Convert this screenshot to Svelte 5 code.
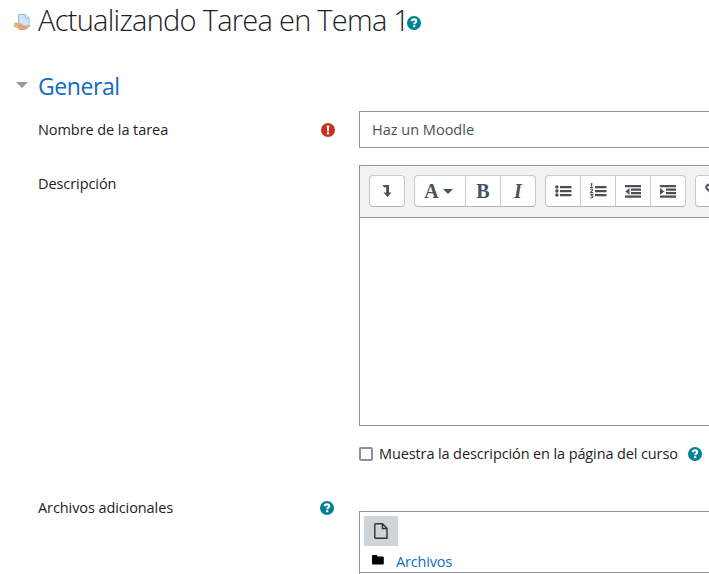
<script>
  const lines = [2, 6, 10];
</script>

{#snippet help()}
  <svg class="dot" viewBox="0 0 14 14" aria-label="Ayuda">
    <circle cx="7" cy="7" r="7" fill="#008196" />
    <path d="M4.600 5.300C4.900 3.900 5.800 3.400 7 3.400c1.300 0 2.200.7 2.200 1.800 0 1.600-2 1.500-2 3" fill="none" stroke="#fff" stroke-width="2.100" />
    <rect x="6.100" y="9.200" width="2.200" height="2" fill="#fff" />
  </svg>
{/snippet}

<main>
  <header>
    <svg class="task" width="17" height="17" viewBox="0 0 17 17">
      <path d="M4.500.5h7l3.500 3.500v8.500H4.500z" fill="#cfe5fa" stroke="#8dbbe8" />
      <path d="M11.500.5V4H15" fill="#eaf5ff" stroke="#8dbbe8" />
      <path d="M0 9c2-.8 4-.8 6 0l2 1.100c1 .6.4 1.500-.7 1.400l4 .3L15 11c1.400-.1 1.500 1 .5 1.800-2.700 2.300-5 3.200-8 3C4.700 15.500 3 13.500 0 13z" fill="#e8b27c" />
      <path d="M4.500 11.300l3 .8 4 .1M5 15c3 1.200 6 .6 9-1.500" fill="none" stroke="#b87a45" stroke-width=".7" />
    </svg>
    <h1>Actualizando Tarea en Tema 1</h1>
    {@render help()}
  </header>

  <div class="section">
    <svg width="12" height="6" viewBox="0 0 12 6"><path d="M0 0h12L6 6z" fill="#999" /></svg>
    <h2>General</h2>
  </div>

  <div class="row name">
    <div class="label"><span class="t1">Nombre de la tarea</span>
      <svg class="dot" viewBox="0 0 14 14" aria-label="Obligatorio">
        <circle cx="7" cy="7" r="7" fill="#ca3120" />
        <path d="M5.800 2.500h2.400L7.900 8.200H6.100zM5.900 9.300h2.200v2.200H5.900z" fill="#fff" />
      </svg>
    </div>
    <div class="input"><span class="t2">Haz un Moodle</span></div>
  </div>

  <div class="row desc">
    <div class="label"><span class="t3">Descripción</span></div>
    <div class="field">
      <div class="editor">
        <div class="toolbar">
          <div class="group">
            <button aria-label="Mostrar más botones"><svg width="10" height="14" viewBox="0 0 10 14"><path d="M.5 1h6.500v7.500h2.500L5.500 13l-4-4.500H4.200V3.200H2z" /></svg></button>
          </div>
          <div class="group">
            <button class="wide"><b>A</b><svg class="caret" width="10" height="5" viewBox="0 0 10 5"><path d="M0 0h10L5 5z" /></svg></button>
            <button><b>B</b></button>
            <button><b><i>I</i></b></button>
          </div>
          <div class="group">
            <button aria-label="Lista"><svg width="17" height="13" viewBox="0 0 17 13">
              {#each lines as y}<circle cx="1.900" cy={y} r="1.800" /><path d="M5 {y - 1}h11.500v2.300H5z" />{/each}
            </svg></button>
            <button aria-label="Lista numerada"><svg width="17" height="16" viewBox="0 0 17 16">
              {#each lines as y}<path d="M5 {y + 1}h11.500v2.300H5z" />{/each}
              <path d="M.5 1.300l1.200-.6v4M0 4.500h3.200M.3 6.500c.5-.8 2.400-.7 2.300.4C2.500 7.900.6 8.300.5 9.500h2.700M.3 11.400h2.400L1.500 12.800c2.200 0 1.500 2.500-1.300 1.900" fill="none" stroke="#495057" stroke-width="1.100" />
            </svg></button>
            <button aria-label="Reducir sangría"><svg width="16" height="13" viewBox="0 0 16 13"><path d="M0 0h16v2.300H0zM6 3.500h10v2.300H6zM6 7h10v2.300H6zM0 10.500h16v2.300H0zM4.500 3v6.800L.3 6.400z" /></svg></button>
            <button aria-label="Aumentar sangría"><svg width="16" height="13" viewBox="0 0 16 13"><path d="M0 0h16v2.300H0zM6 3.500h10v2.300H6zM6 7h10v2.300H6zM0 10.500h16v2.300H0zM0 3v6.800l4.300-3.400z" /></svg></button>
          </div>
          <div class="group">
            <button class="link" aria-label="Enlace"><svg width="16" height="16" viewBox="0 0 16 16"><path d="M7.500 5.500L5.300 3.300a2 2 0 0 0-2.800 0l-.6.600a2 2 0 0 0 0 2.800L5 9.800a2 2 0 0 0 2.800 0M8.500 10.500l2.200 2.200a2 2 0 0 0 2.800 0l.6-.6a2 2 0 0 0 0-2.800L11 6.200a2 2 0 0 0-2.800 0" fill="none" stroke="#495057" stroke-width="2" /></svg></button>
          </div>
        </div>
        <div class="canvas"></div>
      </div>
      <div class="check">
        <span class="box"></span><span class="t4">Muestra la descripción en la página del curso</span>
        {@render help()}
      </div>
    </div>
  </div>

  <div class="row files">
    <div class="label"><span class="t5">Archivos adicionales</span>{@render help()}</div>
    <div class="manager">
      <div class="actions">
        <button class="new" aria-label="Agregar"><svg width="14" height="16" viewBox="0 0 14 16"><path d="M1.500.8h7L13 5.300v9.900H1.500A.7.7 0 0 1 .8 14.500v-13A.7.7 0 0 1 1.500.8zM8.400 1v4.500H13" fill="none" stroke="#343033" stroke-width="1.400" /></svg></button>
        <div class="path">
          <svg width="12" height="10" viewBox="0 0 12 10"><path d="M0 1Q0 0 1 0h3.300q1 0 1 1v.5h5.500q1 0 1 1V8.500q0 1-1 1H1q-1 0-1-1z" fill="#000" /></svg>
          <span class="t6">Archivos</span>
        </div>
      </div>
    </div>
  </div>
</main>

<style>
  :global(body) { background: #fff; overflow: hidden; }
  main {
    width: 709px; height: 574px; overflow: hidden; box-sizing: border-box;
    font-family: "Open Sans", "Noto Sans", sans-serif; font-size: 14.500px; line-height: 22px; color: #1d2125;
  }
  span { white-space: nowrap; }
  header { display: flex; align-items: center; height: 42px; padding-left: 14px; }
  .task { margin: 3px 7px 0 0; flex: none; }
  h1 { margin: -2px 0 0; width: 369px; font-size: 29px; font-weight: 300; line-height: 40px; white-space: nowrap; letter-spacing: -0.730px; }
  .dot { width: 14px; height: 14px; flex: none; }
  header .dot { margin-top: 4px; }
  .section { display: flex; align-items: center; height: 32px; margin-top: 29px; padding-left: 16px; gap: 10px; }
  .section svg { margin-bottom: 5px; }
  h2 { margin: -2px 0 0; font-size: 23px; font-weight: 400; line-height: 32px; color: #0f6cbf; letter-spacing: -0.430px; }
  .row { display: flex; padding-left: 38px; }
  .label { display: flex; justify-content: space-between; align-items: center; width: 297px; height: 22px; margin-right: 24px; flex: none; }
  .name { margin-top: 8px; }
  .name .label { margin-top: 8px; }
  .name .dot { margin-bottom: 1px; }
  .input { display: flex; align-items: center; flex: none; width: 370px; height: 37px; box-sizing: border-box; border: 1px solid #8f959e; padding-left: 12px; color: #495057; }
  .desc { margin-top: 17px; }
  .desc .label { margin-top: 8px; }
  .field { flex: none; width: 370px; }
  .editor { height: 261px; box-sizing: border-box; border: 1px solid #8f959e; display: flex; flex-direction: column; }
  .toolbar { display: flex; gap: 9px; height: 52px; padding: 9px; box-sizing: border-box; background: #f2f2f2; border-bottom: 1px solid #8f959e; flex: none; }
  .canvas { flex: 1; }
  .group { display: flex; height: 32px; box-sizing: border-box; border: 1px solid #c8c8c8; border-bottom-color: #b3b3b3; border-radius: 4px; background: #fff; flex: none; overflow: hidden; }
  button { display: flex; align-items: center; justify-content: center; width: 34px; height: 30px; padding: 0; border: 0; background: transparent; color: #495057; font: 20px/30px "Liberation Serif", serif; box-sizing: content-box; }
  button + button { border-left: 1px solid #ccc; }
  button svg { fill: #495057; }
  .wide { width: 50px; }
  .wide b { margin-left: -3px; }
  .caret { margin-left: 4px; }
  .link { justify-content: flex-start; padding-left: 9px; }
  .link svg { margin-bottom: 3px; }
  .check { display: flex; align-items: center; height: 22px; margin-top: 17px; }
  .box { width: 14px; height: 14px; box-sizing: border-box; border: 2px solid #8f8f9d; border-radius: 2px; margin-right: 6px; }
  .t4 { width: 309px; }
  .files { margin-top: 46px; }
  .files .label { width: 296px; margin: -15px 25px 0 0; }
  .files .t5 { margin-top: 2px; }
  .files .dot { margin-top: 2px; }
  .manager { flex: none; width: 370px; height: 90px; box-sizing: border-box; border: 1px solid #8f959e; }
  .actions { display: flow-root; height: 60px; border-bottom: 1px solid #8f959e; }
  .new { background: #ced4da; height: 30px; margin: 4px 0 0 4px; }
  .path { display: flex; align-items: center; height: 22px; margin-top: 5px; padding-left: 12px; gap: 12px; color: #0f6cbf; }
  .path svg { margin-bottom: 4px; }
  .t1 { letter-spacing: -0.070px; }
  .t2 { letter-spacing: 0; }
  .t3 { letter-spacing: -0.070px; }
  .t4 { letter-spacing: -0.115px; }
  .t5 { letter-spacing: -0.090px; }
  .t6 { letter-spacing: -0.180px; }
</style>
